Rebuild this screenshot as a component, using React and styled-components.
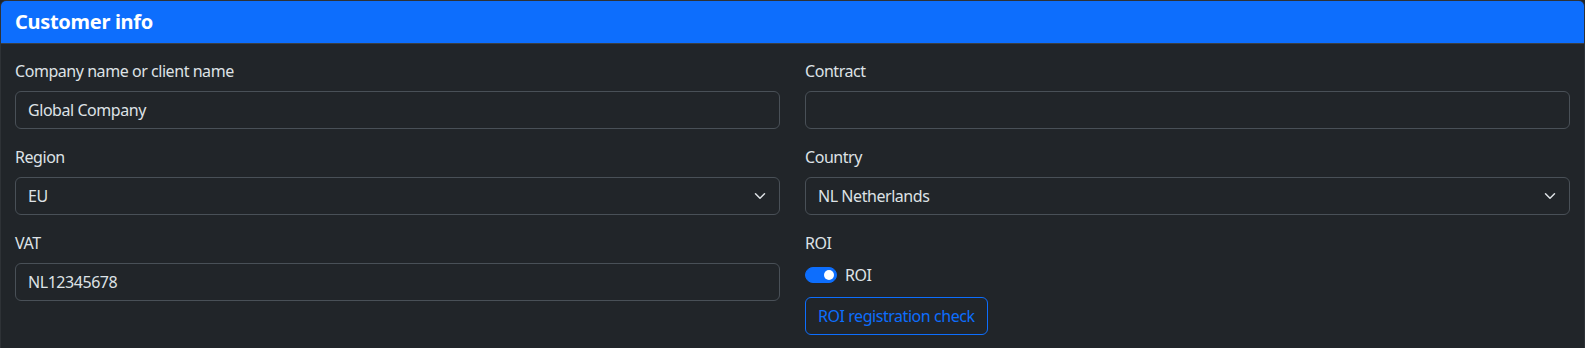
import React, { useState } from 'react';
import styled, { createGlobalStyle } from 'styled-components';

const GlobalStyle = createGlobalStyle`
    body {
        margin: 0;
        background-color: #212529;
        color: #dee2e6;
        font-family: "Segoe UI", "Noto Sans", "Liberation Sans", sans-serif;
        font-size: 16px;
        line-height: 1.5;
        letter-spacing: -0.45px;
    }
    * {
        box-sizing: border-box;
    }
`

const Card = styled.div`
    border: 1px solid #2e3236;
    border-radius: 6px;
    background-color: #212529;
`

const CardHeader = styled.div`
    background-color: #0d6efd;
    border-bottom: 1px solid #3a3f44;
    border-radius: 5px 5px 0 0;
    padding: 9px 14px 9px;
`

const Title = styled.h5`
    margin: 0;
    font-size: 20px;
    font-weight: 700;
    line-height: 24px;
    letter-spacing: -0.3px;
    color: #fff;
`

const CardBody = styled.div`
    padding: 15px 14px 16px 14px;
`

const Row = styled.div`
    display: grid;
    grid-template-columns: 1fr 1fr;
    column-gap: 25px;
`

const Column = styled.div`
    display: flex;
    flex-direction: column;
`

const Field = styled.div`
    margin-bottom: 16px;
`

const Label = styled.label`
    display: block;
    margin-bottom: 8px;
    line-height: 24px;
`

const Input = styled.input`
    display: block;
    width: 100%;
    height: 38px;
    padding: 6px 12px;
    font: inherit;
    letter-spacing: inherit;
    color: #dee2e6;
    background-color: #212529;
    border: 1px solid #495057;
    border-radius: 6px;
    outline: none;
`

const SelectWrap = styled.div`
    position: relative;
`

const Select = styled.select`
    display: block;
    width: 100%;
    height: 38px;
    padding: 6px 36px 6px 12px;
    font: inherit;
    letter-spacing: inherit;
    color: #dee2e6;
    background-color: #212529;
    border: 1px solid #495057;
    border-radius: 6px;
    appearance: none;
    outline: none;
`

const Chevron = styled.svg`
    position: absolute;
    right: 12px;
    top: 13px;
    pointer-events: none;
`

const SwitchRow = styled.div`
    display: flex;
    align-items: center;
    min-height: 24px;
    margin-bottom: 2px;
    gap: 8px;
`

const Switch = styled.span`
    position: relative;
    width: 32px;
    height: 16px;
    border-radius: 8px;
    background-color: ${p => p.checked ? '#0d6efd' : 'transparent'};
    border: 1px solid ${p => p.checked ? '#0d6efd' : '#495057'};
    cursor: pointer;

    &::after {
        content: '';
        position: absolute;
        top: 2px;
        left: ${p => p.checked ? '18px' : '2px'};
        width: 10px;
        height: 10px;
        border-radius: 50%;
        background-color: ${p => p.checked ? '#fff' : '#6c757d'};
    }
`

const OutlineButton = styled.button`
    align-self: flex-start;
    margin-top: 8px;
    height: 38px;
    padding: 6px 12px;
    font: inherit;
    letter-spacing: inherit;
    color: #0d6efd;
    background: transparent;
    border: 1px solid #0d6efd;
    border-radius: 6px;
    cursor: pointer;
`

const ChevronIcon = () => (
    <Chevron width="16" height="12" viewBox="0 0 16 16">
        <path fill="none" stroke="#dee2e6" strokeLinecap="round" strokeLinejoin="round" strokeWidth="2" d="m2 5 6 6 6-6" />
    </Chevron>
)

const App = () => {
    const [roi, setRoi] = useState(true);

    return (
        <>
            <GlobalStyle />
            <Card>
                <CardHeader>
                    <Title>Customer info</Title>
                </CardHeader>
                <CardBody>
                    <Row>
                        <Column>
                            <Field>
                                <Label>Company name or client name</Label>
                                <Input defaultValue='Global Company' />
                            </Field>
                            <Field>
                                <Label>Region</Label>
                                <SelectWrap>
                                    <Select defaultValue='EU'>
                                        <option>EU</option>
                                        <option>US</option>
                                        <option>APAC</option>
                                    </Select>
                                    <ChevronIcon />
                                </SelectWrap>
                            </Field>
                            <Field>
                                <Label>VAT</Label>
                                <Input defaultValue='NL12345678' />
                            </Field>
                        </Column>
                        <Column>
                            <Field>
                                <Label>Contract</Label>
                                <Input defaultValue='' />
                            </Field>
                            <Field>
                                <Label>Country</Label>
                                <SelectWrap>
                                    <Select defaultValue='NL'>
                                        <option value='NL'>NL Netherlands</option>
                                        <option value='BE'>BE Belgium</option>
                                        <option value='DE'>DE Germany</option>
                                    </Select>
                                    <ChevronIcon />
                                </SelectWrap>
                            </Field>
                            <Field>
                                <Label>ROI</Label>
                                <SwitchRow>
                                    <Switch checked={roi} onClick={() => setRoi(!roi)} />
                                    <span>ROI</span>
                                </SwitchRow>
                                <OutlineButton>ROI registration check</OutlineButton>
                            </Field>
                        </Column>
                    </Row>
                </CardBody>
            </Card>
        </>
    )
}

export default App;
